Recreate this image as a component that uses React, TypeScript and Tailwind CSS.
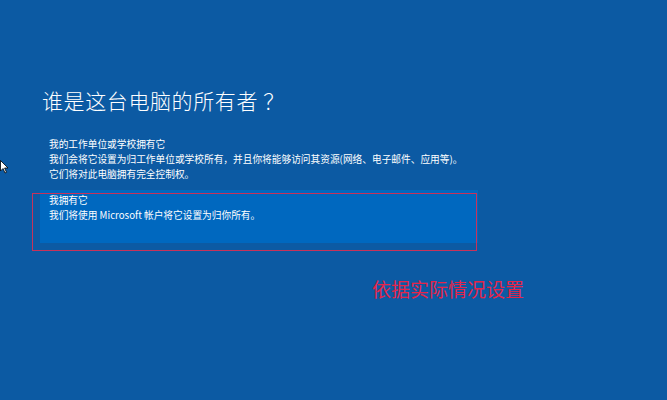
import React from "react";

const font = { fontFamily: '"Noto Sans CJK SC", "Noto Sans", sans-serif' };

function Cursor() {
  return (
    <svg
      className="absolute left-0 top-[160px]"
      width="9"
      height="14"
      viewBox="0 0 9 14"
    >
      <path d="M0.5 0.5 L0.5 11 L3 8.5 L5 13 L6.5 12.3 L4.6 8 L8 8 Z" fill="#fff" stroke="#000" strokeWidth="0.8" />
    </svg>
  );
}

export default function App() {
  return (
    <div
      className="relative w-[667px] h-[400px] overflow-hidden bg-[#0c5aa3] text-white"
      style={font}
    >
      <Cursor />
      <div className="pl-[42px] pt-[84px] flex flex-col">
        <h1 className="text-[21px] font-light leading-[32px] tracking-[0.6px]">
          谁是这台电脑的所有者 ？
        </h1>

        <div className="mt-[21px] pl-[7px] text-[9.7px] leading-[15px]">
          <div>我的工作单位或学校拥有它</div>
          <div>我们会将它设置为归工作单位或学校所有，并且你将能够访问其资源(网络、电子邮件、应用等)。</div>
          <div>它们将对此电脑拥有完全控制权。</div>
        </div>

        <div className="relative mt-[8px] w-[438px] h-[53px] -ml-[2px] bg-[#0068bf] pl-[9px] pt-[3px] text-[9.7px] leading-[15px]">
          <div>我拥有它</div>
          <div>我们将使用 Microsoft 帐户将它设置为归你所有。</div>
          <div className="absolute left-[-8px] top-[3px] w-[445px] h-[58px] border-[1.5px] border-[#c8325a]" />
        </div>

        <div className="mt-[33px] ml-[330px] text-[19px] leading-[26px] text-[#e5254a]">
          依据实际情况设置
        </div>
      </div>
    </div>
  );
}
